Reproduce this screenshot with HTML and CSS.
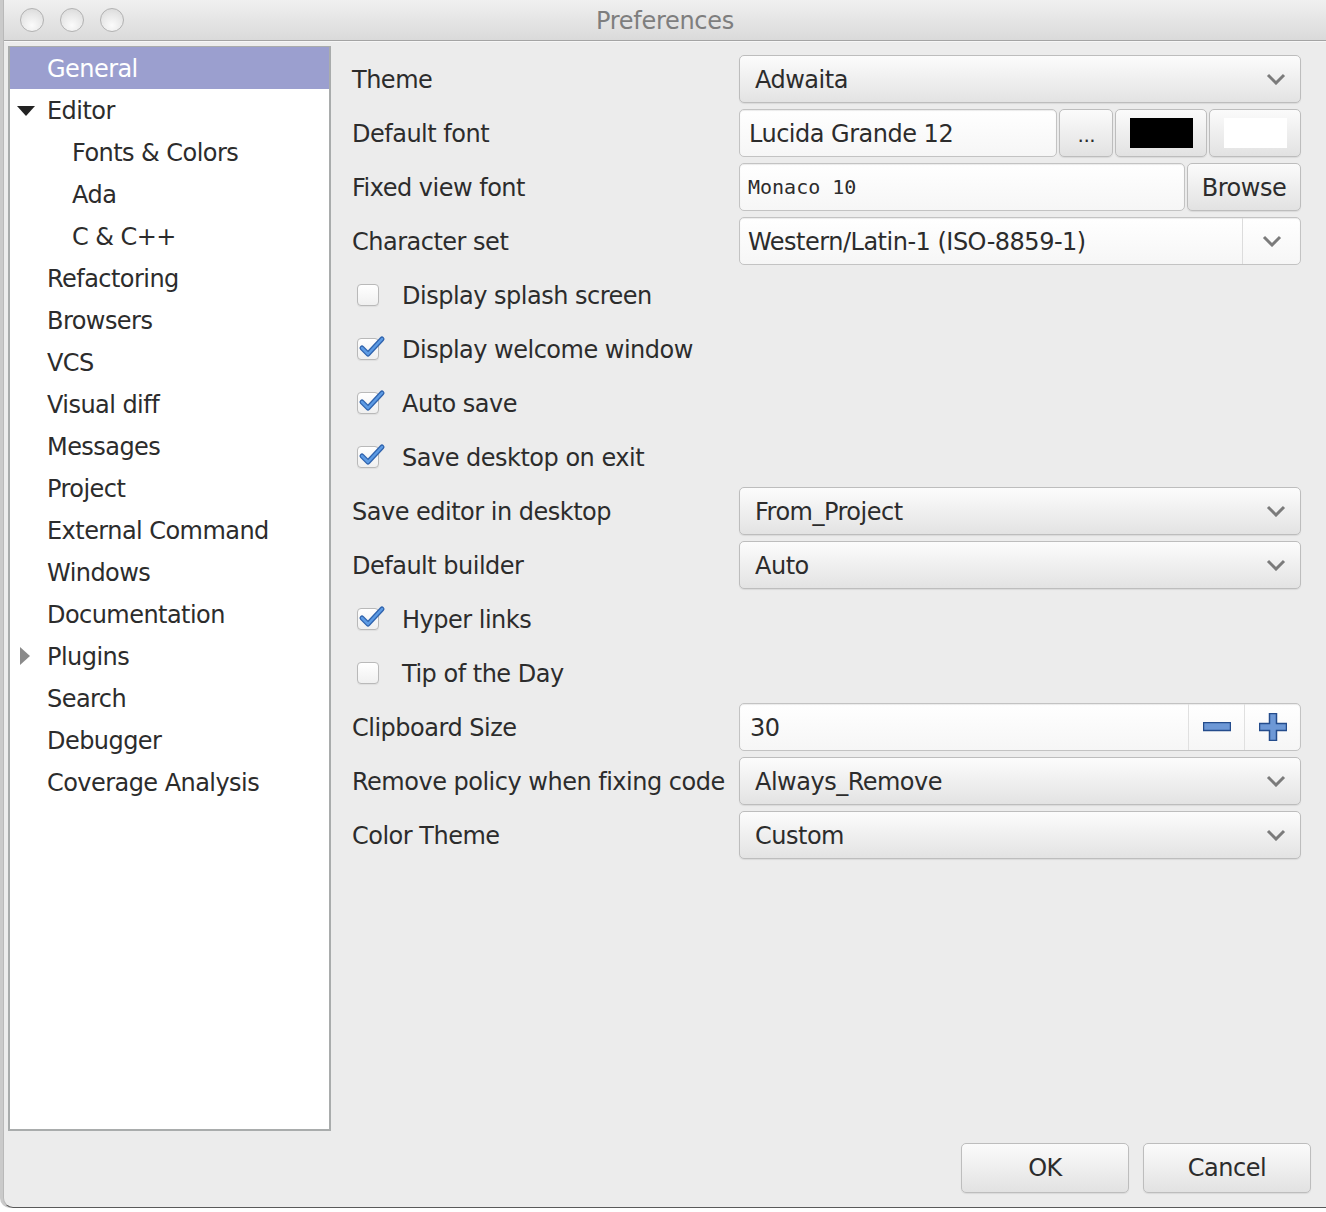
FILE: index.html
```html
<!DOCTYPE html>
<html>
<head>
<meta charset="utf-8">
<title>Preferences</title>
<link rel="stylesheet" href="styles.css">
</head>
<body>
<div class="window">
  <div class="titlebar">
    <div class="lights"><span class="light"></span><span class="light"></span><span class="light"></span></div>
    <div class="title">Preferences</div>
  </div>
  <div class="main">
    <ul class="sidebar">
      <li class="item selected">General</li>
      <li class="item"><span class="tri-down"></span>Editor</li>
      <li class="item sub">Fonts &amp; Colors</li>
      <li class="item sub">Ada</li>
      <li class="item sub">C &amp; C++</li>
      <li class="item">Refactoring</li>
      <li class="item">Browsers</li>
      <li class="item">VCS</li>
      <li class="item">Visual diff</li>
      <li class="item">Messages</li>
      <li class="item">Project</li>
      <li class="item">External Command</li>
      <li class="item">Windows</li>
      <li class="item">Documentation</li>
      <li class="item"><span class="tri-right"></span>Plugins</li>
      <li class="item">Search</li>
      <li class="item">Debugger</li>
      <li class="item">Coverage Analysis</li>
    </ul>
    <div class="panel">
      <div class="form">
        <div class="label">Theme</div>
        <div class="combo"><span>Adwaita</span><svg class="chev" width="20" height="12" viewBox="0 0 20 12"><polyline points="2,2 10,10 18,2"/></svg></div>

        <div class="label">Default font</div>
        <div class="ctl-row">
          <div class="field font-field">Lucida Grande 12</div>
          <div class="btn dots">...</div>
          <div class="btn swatch-btn"><span class="swatch black"></span></div>
          <div class="btn swatch-btn"><span class="swatch white"></span></div>
        </div>

        <div class="label">Fixed view font</div>
        <div class="ctl-row">
          <div class="field mono-field">Monaco 10</div>
          <div class="btn browse">Browse</div>
        </div>

        <div class="label">Character set</div>
        <div class="field editable-combo"><span class="ec-text">Western/Latin-1 (ISO-8859-1)</span><span class="ec-arrow"><svg class="chev" width="20" height="12" viewBox="0 0 20 12"><polyline points="2,2 10,10 18,2"/></svg></span></div>

        <div class="check-row"><span class="checkbox"></span>Display splash screen</div>
        <div class="check-row"><span class="checkbox checked"><svg class="tick" width="30" height="28" viewBox="0 0 30 28"><path class="t1" d="M5 14 L11 20 L25 5"/><path class="t2" d="M5 14 L11 20 L25 5"/></svg></span>Display welcome window</div>
        <div class="check-row"><span class="checkbox checked"><svg class="tick" width="30" height="28" viewBox="0 0 30 28"><path class="t1" d="M5 14 L11 20 L25 5"/><path class="t2" d="M5 14 L11 20 L25 5"/></svg></span>Auto save</div>
        <div class="check-row"><span class="checkbox checked"><svg class="tick" width="30" height="28" viewBox="0 0 30 28"><path class="t1" d="M5 14 L11 20 L25 5"/><path class="t2" d="M5 14 L11 20 L25 5"/></svg></span>Save desktop on exit</div>

        <div class="label">Save editor in desktop</div>
        <div class="combo"><span>From_Project</span><svg class="chev" width="20" height="12" viewBox="0 0 20 12"><polyline points="2,2 10,10 18,2"/></svg></div>

        <div class="label">Default builder</div>
        <div class="combo"><span>Auto</span><svg class="chev" width="20" height="12" viewBox="0 0 20 12"><polyline points="2,2 10,10 18,2"/></svg></div>

        <div class="check-row"><span class="checkbox checked"><svg class="tick" width="30" height="28" viewBox="0 0 30 28"><path class="t1" d="M5 14 L11 20 L25 5"/><path class="t2" d="M5 14 L11 20 L25 5"/></svg></span>Hyper links</div>
        <div class="check-row"><span class="checkbox"></span>Tip of the Day</div>

        <div class="label">Clipboard Size</div>
        <div class="field spinner">
          <span class="sp-text">30</span>
          <span class="sp-btn"><svg width="28" height="10" viewBox="0 0 28 10"><rect class="sp-shape" x="0.5" y="0.5" width="27" height="8"/></svg></span>
          <span class="sp-btn"><svg width="28" height="28" viewBox="0 0 28 28"><path class="sp-shape" d="M10.5 0.5 h7 v10 h10 v7 h-10 v10 h-7 v-10 h-10 v-7 h10 z"/></svg></span>
        </div>

        <div class="label">Remove policy when fixing code</div>
        <div class="combo"><span>Always_Remove</span><svg class="chev" width="20" height="12" viewBox="0 0 20 12"><polyline points="2,2 10,10 18,2"/></svg></div>

        <div class="label">Color Theme</div>
        <div class="combo"><span>Custom</span><svg class="chev" width="20" height="12" viewBox="0 0 20 12"><polyline points="2,2 10,10 18,2"/></svg></div>
      </div>
    </div>
  </div>
  <div class="footer">
    <div class="btn footer-btn">OK</div>
    <div class="btn footer-btn">Cancel</div>
  </div>
</div>
</body>
</html>
```

FILE: styles.css
```css
html, body {
  margin: 0;
  padding: 0;
}
body {
  width: 1326px;
  height: 1212px;
  overflow: hidden;
  background: #ffffff;
  font-family: "DejaVu Sans", "Noto Sans", sans-serif;
  color: #2c2c2c;
}
.window {
  margin-left: 3px;
  width: 1322px;
  height: 1207px;
  background: #ececec;
  border-left: 1px solid #b9b9b9;
  border-bottom: 1px solid #5a5a5a;
  border-bottom-left-radius: 10px;
  box-shadow: -3px 0 0 #cacaca;
  display: flex;
  flex-direction: column;
  overflow: hidden;
}
.titlebar {
  height: 40px;
  border-bottom: 1px solid #a4a4a4;
  background: linear-gradient(#f0f0f0, #dadada);
  display: flex;
  align-items: center;
  position: relative;
  flex: none;
}
.lights {
  display: flex;
  gap: 16px;
  padding-left: 16px;
}
.light {
  width: 22px;
  height: 22px;
  border-radius: 50%;
  border: 1px solid #b2b2b2;
  background: radial-gradient(circle at 50% 75%, #fbfbfb 0%, #e6e6e6 60%, #d6d6d6 100%);
  box-sizing: content-box;
}
.title {
  position: absolute;
  left: 0;
  right: 0;
  top: 1px;
  line-height: 40px;
  text-align: center;
  font-size: 24px;
  color: #7e7e7e;
  letter-spacing: -0.3px;
  padding-left: 0;
}
.main {
  display: flex;
  height: 1090px;
  flex: none;
  box-shadow: inset 0 1px 0 #f6f6f6;
}
.sidebar {
  list-style: none;
  margin: 5px 0 0 4px;
  padding: 0;
  width: 319px;
  height: 1082px;
  border: 2px solid #a9acac;
  border-top-width: 1px;
  background: #ffffff;
  flex: none;
}
.item {
  height: 42px;
  line-height: 45px;
  font-size: 24px;
  letter-spacing: -0.55px;
  padding-left: 37px;
  position: relative;
  white-space: nowrap;
}
.item.sub {
  padding-left: 62px;
}
.item.selected {
  background: #9b9fcf;
  color: #ffffff;
}
.tri-down {
  position: absolute;
  left: 7px;
  top: 17px;
  width: 0;
  height: 0;
  border-left: 9px solid transparent;
  border-right: 9px solid transparent;
  border-top: 10px solid #222;
}
.tri-right {
  position: absolute;
  left: 10px;
  top: 12px;
  width: 0;
  height: 0;
  border-top: 9px solid transparent;
  border-bottom: 9px solid transparent;
  border-left: 10px solid #8a8a8a;
}
.panel {
  flex: 1;
  padding: 14px 25px 0 21px;
}
.form {
  display: grid;
  grid-template-columns: 387px 562px;
  grid-auto-rows: 48px;
  row-gap: 6px;
  align-items: center;
}
.label {
  font-size: 24px;
  letter-spacing: -0.5px;
  white-space: nowrap;
  padding-top: 2px;
}
.combo {
  height: 46px;
  border: 1px solid #bdbdbd;
  border-radius: 5px;
  background: linear-gradient(#fcfcfc, #e3e3e3);
  box-shadow: 0 1px 1px rgba(0,0,0,0.08);
  display: flex;
  align-items: center;
  justify-content: space-between;
  padding: 0 14px 0 15px;
  font-size: 24px;
  letter-spacing: -0.5px;
}
.combo span {
  padding-top: 2px;
}
.chev {
  fill: none;
  stroke: #7b7b7b;
  stroke-width: 3;
}
.ctl-row {
  display: flex;
  gap: 2px;
  height: 48px;
}
.field {
  height: 46px;
  border: 1px solid #c3c3c3;
  border-radius: 5px;
  background: linear-gradient(#ffffff, #f6f6f6);
  box-shadow: inset 0 1px 1px rgba(0,0,0,0.08);
  display: flex;
  align-items: center;
  font-size: 24px;
  letter-spacing: -0.5px;
}
.font-field {
  width: 308px;
  padding-left: 9px;
  padding-top: 2px;
  height: 44px;
}
.mono-field {
  width: 436px;
  padding-left: 8px;
  font-family: "DejaVu Sans Mono", monospace;
  font-size: 20px;
  letter-spacing: 0;
}
.btn {
  height: 46px;
  border: 1px solid #bdbdbd;
  border-radius: 5px;
  background: linear-gradient(#fbfbfb, #e2e2e2);
  box-shadow: 0 1px 1px rgba(0,0,0,0.08);
  display: flex;
  align-items: center;
  justify-content: center;
  font-size: 24px;
  letter-spacing: -0.5px;
  box-sizing: content-box;
}
.dots {
  width: 52px;
  font-size: 20px;
  padding-top: 4px;
  height: 42px;
}
.swatch-btn {
  width: 90px;
}
.swatch {
  width: 63px;
  height: 30px;
}
.swatch.black {
  background: #000;
}
.swatch.white {
  background: #fff;
}
.browse {
  width: 112px;
  padding-top: 2px;
  height: 44px;
}
.editable-combo {
  padding: 0;
}
.ec-text {
  flex: 1;
  padding-left: 8px;
  padding-top: 2px;
}
.ec-arrow {
  width: 57px;
  height: 46px;
  border-left: 1px solid #dcdcdc;
  display: flex;
  align-items: center;
  justify-content: center;
}
.check-row {
  grid-column: 1 / span 2;
  display: flex;
  align-items: center;
  font-size: 24px;
  letter-spacing: -0.5px;
  padding-left: 5px;
  padding-top: 2px;
}
.checkbox {
  width: 20px;
  height: 20px;
  border: 1px solid #b9b9b9;
  border-radius: 4px;
  background: linear-gradient(#ffffff, #f0f0f0);
  box-shadow: 0 1px 1px rgba(0,0,0,0.06);
  margin-right: 23px;
  position: relative;
  flex: none;
  top: -1px;
}
.tick {
  position: absolute;
  left: -1px;
  top: -5px;
  fill: none;
}
.tick .t1 {
  stroke: #2f63ad;
  stroke-width: 5;
  stroke-linecap: round;
  stroke-linejoin: round;
}
.tick .t2 {
  stroke: #5d9be4;
  stroke-width: 2.5;
  stroke-linecap: round;
  stroke-linejoin: round;
}
.spinner {
  padding: 0;
}
.sp-text {
  flex: 1;
  padding-left: 10px;
  padding-top: 2px;
}
.sp-btn {
  width: 55px;
  height: 46px;
  border-left: 1px solid #e0e0e0;
  display: flex;
  align-items: center;
  justify-content: center;
}
.sp-shape {
  fill: #6d98d6;
  stroke: #244c8c;
  stroke-width: 1.5;
}
.footer {
  flex: 1;
  display: flex;
  justify-content: flex-end;
  align-items: flex-start;
  gap: 14px;
  padding: 12px 15px 0 0;
}
.footer-btn {
  width: 166px;
  height: 48px;
}
```
